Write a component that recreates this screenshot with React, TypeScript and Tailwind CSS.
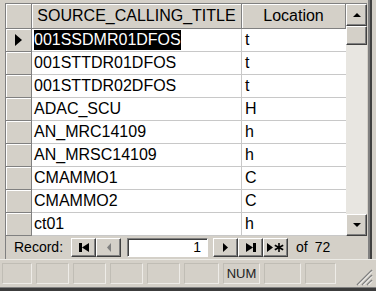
import React from 'react'

const rows: [string, string][] = [
  ['001SSDMR01DFOS', 't'],
  ['001STTDR01DFOS', 't'],
  ['001STTDR02DFOS', 't'],
  ['ADAC_SCU', 'H'],
  ['AN_MRC14109', 'h'],
  ['AN_MRSC14109', 'h'],
  ['CMAMMO1', 'C'],
  ['CMAMMO2', 'C'],
  ['ct01', 'h'],
]

const raised =
  'bg-[#d4d0c8] border border-t-white border-l-white border-r-[#404040] border-b-[#404040] shadow-[inset_-1px_-1px_0_#808080]'

function NavButton({ children }: { children: React.ReactNode }) {
  return (
    <div className={`w-[25px] h-[19px] flex items-center justify-center ${raised}`}>
      {children}
    </div>
  )
}

export default function App() {
  return (
    <div className="w-[376px] h-[291px] bg-[#d4d0c8] flex flex-col overflow-hidden font-['Liberation_Sans',Arial,sans-serif] text-black">
      <div className="flex">
        <div className="pt-[3px] pl-[5px]">
          <div className="flex flex-col border-l border-t border-[#808080]">
            {/* grid + vertical scrollbar */}
            <div className="flex">
              <div className="w-[340px] text-[16px]">
                {/* header */}
                <div className="flex h-[25px]">
                  <div className="w-[26px] bg-[#d4d0c8] border-r border-b border-[#808080] shadow-[inset_1px_1px_0_#fff]" />
                  <div className="w-[210px] bg-[#d4d0c8] border-r border-b border-[#808080] shadow-[inset_1px_1px_0_#fff] flex items-center justify-center">
                    SOURCE_CALLING_TITLE
                  </div>
                  <div className="w-[104px] bg-[#d4d0c8] border-r border-b border-[#808080] shadow-[inset_1px_1px_0_#fff] flex items-center justify-center">
                    Location
                  </div>
                </div>
                {rows.map(([title, loc], i) => (
                  <div key={title} className="flex h-[23px]">
                    <div className="w-[26px] bg-[#d4d0c8] border-r border-b border-[#808080] shadow-[inset_1px_1px_0_#fff] flex items-center justify-center">
                      {i === 0 && (
                        <svg width="7" height="12" viewBox="0 0 7 12">
                          <polygon points="0,0 7,6 0,12" fill="#000" />
                        </svg>
                      )}
                    </div>
                    <div className="w-[210px] bg-white border-r border-b border-[#c8c8c8] pl-[2px] flex items-center">
                      {i === 0 ? (
                        <span className="bg-black text-white h-[20px] leading-[20px] inline-block">{title}</span>
                      ) : (
                        <span>{title}</span>
                      )}
                    </div>
                    <div className="w-[104px] bg-white border-b border-[#c8c8c8] pl-[3px] flex items-center">{loc}</div>
                  </div>
                ))}
              </div>
              {/* scrollbar */}
              <div className="w-[21px] flex flex-col bg-[#e8e6e1]">
                <div className={`h-[22px] flex items-center justify-center ${raised}`}>
                  <svg width="8" height="4" viewBox="0 0 8 4">
                    <polygon points="0,4 4,0 8,4" fill="#000" />
                  </svg>
                </div>
                <div className={`h-[19px] ${raised}`} />
                <div className="flex-1" />
                <div className={`h-[22px] flex items-center justify-center ${raised}`}>
                  <svg width="8" height="4" viewBox="0 0 8 4">
                    <polygon points="0,0 8,0 4,4" fill="#000" />
                  </svg>
                </div>
              </div>
            </div>
            {/* record navigation */}
            <div className="h-[23px] flex items-center text-[14px] pl-[8px]">
              <span>Record:</span>
              <div className="flex ml-[8px]">
                <NavButton>
                  <svg width="10" height="9" viewBox="0 0 10 9">
                    <rect x="0" y="0" width="3" height="9" fill="#000" />
                    <polygon points="10,0 3,4.5 10,9" fill="#000" />
                  </svg>
                </NavButton>
                <NavButton>
                  <svg width="6" height="9" viewBox="0 0 6 9">
                    <polygon points="5,0 1,4.5 5,9" fill="#808080" />
                  </svg>
                </NavButton>
              </div>
              <div className="ml-[6px] w-[81px] h-[19px] bg-white border border-t-[#808080] border-l-[#808080] border-r-white border-b-white shadow-[inset_1px_1px_0_#404040] flex items-center justify-end pr-[6px]">
                1
              </div>
              <div className="flex ml-[5px]">
                <NavButton>
                  <svg width="6" height="9" viewBox="0 0 6 9">
                    <polygon points="0,0 5,4.5 0,9" fill="#000" />
                  </svg>
                </NavButton>
                <NavButton>
                  <svg width="10" height="9" viewBox="0 0 10 9">
                    <polygon points="0,0 7,4.5 0,9" fill="#000" />
                    <rect x="7" y="0" width="3" height="9" fill="#000" />
                  </svg>
                </NavButton>
                <NavButton>
                  <svg width="17" height="9" viewBox="0 0 17 9">
                    <polygon points="0,0 6,4.5 0,9" fill="#000" />
                    <path d="M12 0v9M7.8 2.2l8.4 4.6M7.8 6.8l8.4-4.6" stroke="#000" strokeWidth="1.6" />
                  </svg>
                </NavButton>
              </div>
              <span className="ml-[8px]">of</span>
              <span className="ml-[7px]">72</span>
            </div>
          </div>
        </div>
        {/* right window edge */}
        <div className="flex-1 flex">
          <div className="w-[1px] bg-[#d4d0c8]" />
          <div className="w-[2px] bg-[#808080]" />
          <div className="w-[2px] bg-[#404040]" />
          <div className="flex-1 bg-[#d4d0c8]" />
        </div>
      </div>
      {/* status bar */}
      <div className="h-[28px] flex items-center pl-[2px] gap-[4px] relative border-t border-[#ecebe6]">
        {[30, 33, 33, 33, 33, 35, 37, 37, 31].map((w, i) => (
          <div
            key={i}
            style={{ width: w }}
            className="h-[21px] border border-t-[#c0bdb5] border-l-[#c0bdb5] border-r-[#eeece8] border-b-[#eeece8] flex items-center justify-center text-[13px] text-[#222]"
          >
            {i === 6 ? 'NUM' : ''}
          </div>
        ))}
        <svg className="absolute right-[3px] bottom-[1px]" width="18" height="18" viewBox="0 0 18 18">
          <path d="M17 2L2 17M17 7L7 17M17 12L12 17" stroke="#808080" strokeWidth="1.5" />
          <path d="M17 3.5L3.5 17M17 8.5L8.5 17M17 13.5L13.5 17" stroke="#fff" strokeWidth="1" />
        </svg>
      </div>
      <div className="h-[4px] bg-[#3c3c3c] border-t border-[#808080]" />
    </div>
  )
}
